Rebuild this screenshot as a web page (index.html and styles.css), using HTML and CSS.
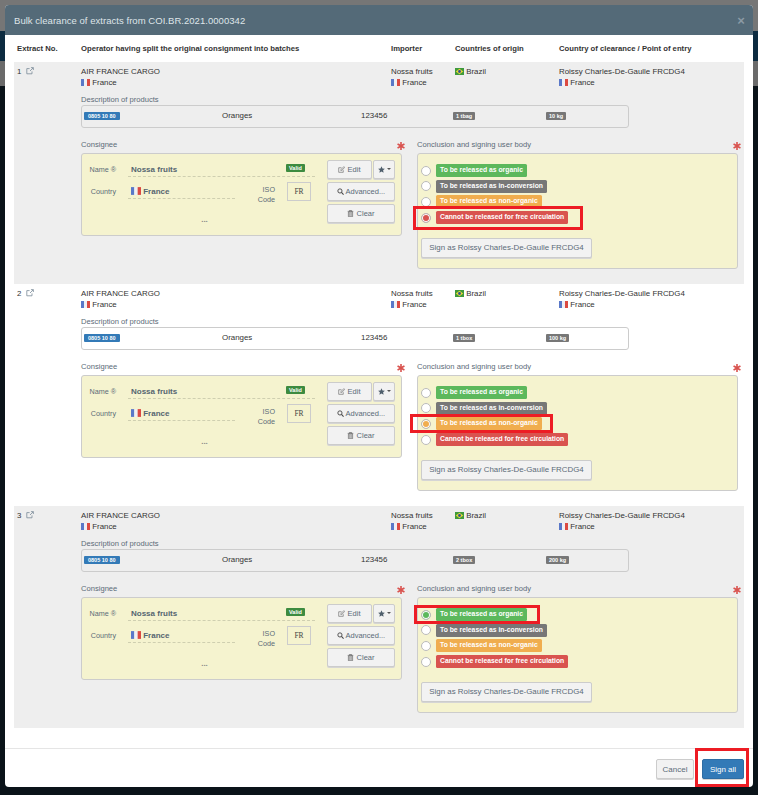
FILE: index.html
```html
<!DOCTYPE html>
<html lang="en">
<head>
    <meta charset="UTF-8">
    <title>Bulk clearance of extracts</title>
    <link rel="stylesheet" href="styles.css">
</head>
<body>
    <svg class="defs" width="0" height="0">
        <symbol id="fr" viewBox="0 0 9 7"><rect width="3" height="7" fill="#5a78c8"/><rect x="3" width="3" height="7" fill="#eef0f6"/><rect x="6" width="3" height="7" fill="#dc4a42"/></symbol>
        <symbol id="br" viewBox="0 0 9 7"><rect width="9" height="7" fill="#3f9a3c"/><path d="M4.5 .8 8.2 3.5 4.5 6.2 .8 3.5z" fill="#e8d834"/><circle cx="4.5" cy="3.5" r="1.4" fill="#2f4f96"/></symbol>
        <symbol id="ext" viewBox="0 0 10 10"><path d="M7.5 5.5v3h-6.5v-6.5h3.5M5 5 9 1M6.2 .8h3v3" fill="none" stroke="#7a8a98" stroke-width="1"/></symbol>
        <symbol id="edit" viewBox="0 0 10 10"><path d="M7.5 6v3h-6.5v-6.5h4M4 6.5l.4-1.6 4-4 1.2 1.2-4 4z" fill="none" stroke="#666" stroke-width=".9"/></symbol>
        <symbol id="search" viewBox="0 0 10 10"><circle cx="4.2" cy="4.2" r="3" fill="none" stroke="#444" stroke-width="1.3"/><path d="M6.4 6.4 9.4 9.4" stroke="#444" stroke-width="1.5"/></symbol>
        <symbol id="trash" viewBox="0 0 10 10"><path d="M2 3h6v6.5h-6zM1 2h8M3.5 2v-1.300h3v1.300M4 4v4.500M6 4v4.500" fill="none" stroke="#555" stroke-width=".9"/></symbol>
        <symbol id="star" viewBox="0 0 10 10"><path d="M5 .4 6.400 3.500 9.800 3.900 7.300 6.200 8 9.600 5 7.900 2 9.600 2.700 6.200 .2 3.900 3.600 3.500z" fill="#4f5f6c"/></symbol>
        <symbol id="req" viewBox="0 0 10 10"><path d="M4 0h2v3.200l2.800-1.600 1 1.700-2.800 1.700 2.800 1.700-1 1.700-2.800-1.600v3.200h-2v-3.200l-2.800 1.600-1-1.700 2.800-1.700-2.800-1.700 1-1.700 2.800 1.600z" fill="#d9534f"/></symbol>
    </svg>

    <div class="backdrop-top"></div>
    <div class="backdrop-nav"></div>
    <div class="backdrop-sub"></div>

    <div class="modal">
        <div class="modal-header">
            <span>Bulk clearance of extracts from COI.BR.2021.0000342</span>
            <span class="close">×</span>
        </div>

        <div class="modal-body">
            <div class="columns heads">
                <div>Extract No.</div>
                <div>Operator having split the original consignment into batches</div>
                <div>Importer</div>
                <div>Countries of origin</div>
                <div>Country of clearance / Point of entry</div>
            </div>

            <div class="extract shaded">
                <div class="columns">
                    <div class="num">1 <svg class="ext"><use href="#ext"/></svg></div>
                    <div>AIR FRANCE CARGO<br><svg class="flag"><use href="#fr"/></svg> France</div>
                    <div>Nossa fruits<br><svg class="flag"><use href="#fr"/></svg> France</div>
                    <div><svg class="flag"><use href="#br"/></svg> Brazil</div>
                    <div>Roissy Charles-De-Gaulle FRCDG4<br><svg class="flag"><use href="#fr"/></svg> France</div>
                </div>
                <div class="details">
                    <div class="caption">Description of products</div>
                    <div class="products">
                        <span><b class="tag blue">0805 10 80</b></span>
                        <span>Oranges</span>
                        <span>123456</span>
                        <span><b class="tag grey">1 tbag</b></span>
                        <span><b class="tag grey">10 kg</b></span>
                    </div>
                    <div class="panels">
                        <div class="panel-left">
                            <div class="caption">Consignee</div>
                            <svg class="req"><use href="#req"/></svg>
                            <div class="box consignee">
                                <div class="fields">
                                    <div class="field name-row">
                                        <label>Name ®</label>
                                        <div class="value wide">Nossa fruits <b class="tag valid">Valid</b></div>
                                    </div>
                                    <div class="field">
                                        <label>Country</label>
                                        <div class="value narrow"><svg class="flag big"><use href="#fr"/></svg> France</div>
                                        <label class="iso">ISO<br>Code</label>
                                        <div class="iso-code">FR</div>
                                    </div>
                                    <div class="dots">...</div>
                                </div>
                                <div class="actions">
                                    <div class="btn-row">
                                        <button class="btn edit"><svg class="ico"><use href="#edit"/></svg> Edit</button>
                                        <button class="btn fav"><svg class="ico"><use href="#star"/></svg><i class="caret"></i></button>
                                    </div>
                                    <button class="btn"><svg class="ico"><use href="#search"/></svg> Advanced...</button>
                                    <button class="btn"><svg class="ico"><use href="#trash"/></svg> Clear</button>
                                </div>
                            </div>
                        </div>
                        <div class="panel-right">
                            <div class="caption">Conclusion and signing user body</div>
                            <svg class="req"><use href="#req"/></svg>
                            <div class="box conclusion">
                                <div class="option"><i class="radio"></i><b class="pill green">To be released as organic</b></div>
                                <div class="option"><i class="radio"></i><b class="pill grey">To be released as in-conversion</b></div>
                                <div class="option"><i class="radio"></i><b class="pill orange">To be released as non-organic</b></div>
                                <div class="option"><i class="radio on-red"></i><b class="pill red">Cannot be released for free circulation</b></div>
                                <button class="btn sign">Sign as Roissy Charles-De-Gaulle FRCDG4</button>
                                <div class="mark mark-1"></div>
                            </div>
                        </div>
                    </div>
                </div>
            </div>

            <div class="extract">
                <div class="columns">
                    <div class="num">2 <svg class="ext"><use href="#ext"/></svg></div>
                    <div>AIR FRANCE CARGO<br><svg class="flag"><use href="#fr"/></svg> France</div>
                    <div>Nossa fruits<br><svg class="flag"><use href="#fr"/></svg> France</div>
                    <div><svg class="flag"><use href="#br"/></svg> Brazil</div>
                    <div>Roissy Charles-De-Gaulle FRCDG4<br><svg class="flag"><use href="#fr"/></svg> France</div>
                </div>
                <div class="details">
                    <div class="caption">Description of products</div>
                    <div class="products">
                        <span><b class="tag blue">0805 10 80</b></span>
                        <span>Oranges</span>
                        <span>123456</span>
                        <span><b class="tag grey">1 tbox</b></span>
                        <span><b class="tag grey">100 kg</b></span>
                    </div>
                    <div class="panels">
                        <div class="panel-left">
                            <div class="caption">Consignee</div>
                            <svg class="req"><use href="#req"/></svg>
                            <div class="box consignee">
                                <div class="fields">
                                    <div class="field name-row">
                                        <label>Name ®</label>
                                        <div class="value wide">Nossa fruits <b class="tag valid">Valid</b></div>
                                    </div>
                                    <div class="field">
                                        <label>Country</label>
                                        <div class="value narrow"><svg class="flag big"><use href="#fr"/></svg> France</div>
                                        <label class="iso">ISO<br>Code</label>
                                        <div class="iso-code">FR</div>
                                    </div>
                                    <div class="dots">...</div>
                                </div>
                                <div class="actions">
                                    <div class="btn-row">
                                        <button class="btn edit"><svg class="ico"><use href="#edit"/></svg> Edit</button>
                                        <button class="btn fav"><svg class="ico"><use href="#star"/></svg><i class="caret"></i></button>
                                    </div>
                                    <button class="btn"><svg class="ico"><use href="#search"/></svg> Advanced...</button>
                                    <button class="btn"><svg class="ico"><use href="#trash"/></svg> Clear</button>
                                </div>
                            </div>
                        </div>
                        <div class="panel-right">
                            <div class="caption">Conclusion and signing user body</div>
                            <svg class="req"><use href="#req"/></svg>
                            <div class="box conclusion">
                                <div class="option"><i class="radio"></i><b class="pill green">To be released as organic</b></div>
                                <div class="option"><i class="radio"></i><b class="pill grey">To be released as in-conversion</b></div>
                                <div class="option"><i class="radio on-orange"></i><b class="pill orange">To be released as non-organic</b></div>
                                <div class="option"><i class="radio"></i><b class="pill red">Cannot be released for free circulation</b></div>
                                <button class="btn sign">Sign as Roissy Charles-De-Gaulle FRCDG4</button>
                                <div class="mark mark-2"></div>
                            </div>
                        </div>
                    </div>
                </div>
            </div>

            <div class="extract shaded">
                <div class="columns">
                    <div class="num">3 <svg class="ext"><use href="#ext"/></svg></div>
                    <div>AIR FRANCE CARGO<br><svg class="flag"><use href="#fr"/></svg> France</div>
                    <div>Nossa fruits<br><svg class="flag"><use href="#fr"/></svg> France</div>
                    <div><svg class="flag"><use href="#br"/></svg> Brazil</div>
                    <div>Roissy Charles-De-Gaulle FRCDG4<br><svg class="flag"><use href="#fr"/></svg> France</div>
                </div>
                <div class="details">
                    <div class="caption">Description of products</div>
                    <div class="products">
                        <span><b class="tag blue">0805 10 80</b></span>
                        <span>Oranges</span>
                        <span>123456</span>
                        <span><b class="tag grey">2 tbox</b></span>
                        <span><b class="tag grey">200 kg</b></span>
                    </div>
                    <div class="panels">
                        <div class="panel-left">
                            <div class="caption">Consignee</div>
                            <svg class="req"><use href="#req"/></svg>
                            <div class="box consignee">
                                <div class="fields">
                                    <div class="field name-row">
                                        <label>Name ®</label>
                                        <div class="value wide">Nossa fruits <b class="tag valid">Valid</b></div>
                                    </div>
                                    <div class="field">
                                        <label>Country</label>
                                        <div class="value narrow"><svg class="flag big"><use href="#fr"/></svg> France</div>
                                        <label class="iso">ISO<br>Code</label>
                                        <div class="iso-code">FR</div>
                                    </div>
                                    <div class="dots">...</div>
                                </div>
                                <div class="actions">
                                    <div class="btn-row">
                                        <button class="btn edit"><svg class="ico"><use href="#edit"/></svg> Edit</button>
                                        <button class="btn fav"><svg class="ico"><use href="#star"/></svg><i class="caret"></i></button>
                                    </div>
                                    <button class="btn"><svg class="ico"><use href="#search"/></svg> Advanced...</button>
                                    <button class="btn"><svg class="ico"><use href="#trash"/></svg> Clear</button>
                                </div>
                            </div>
                        </div>
                        <div class="panel-right">
                            <div class="caption">Conclusion and signing user body</div>
                            <svg class="req"><use href="#req"/></svg>
                            <div class="box conclusion">
                                <div class="option"><i class="radio on-green"></i><b class="pill green">To be released as organic</b></div>
                                <div class="option"><i class="radio"></i><b class="pill grey">To be released as in-conversion</b></div>
                                <div class="option"><i class="radio"></i><b class="pill orange">To be released as non-organic</b></div>
                                <div class="option"><i class="radio"></i><b class="pill red">Cannot be released for free circulation</b></div>
                                <button class="btn sign">Sign as Roissy Charles-De-Gaulle FRCDG4</button>
                                <div class="mark mark-3"></div>
                            </div>
                        </div>
                    </div>
                </div>
            </div>
        </div>

        <div class="modal-footer">
            <button class="btn cancel">Cancel</button>
            <button class="btn primary">Sign all</button>
            <div class="mark mark-sign"></div>
        </div>
    </div>
</body>
</html>
```

FILE: styles.css
```css
* {
    box-sizing: border-box;
}
html, body {
    margin: 0;
    height: 795px;
    overflow: hidden;
}
body {
    position: relative;
    padding: 5px 5px 0;
    background: #0a1319;
    font-family: "Liberation Sans", Arial, sans-serif;
    font-size: 7.9px;
    line-height: 11px;
    color: #333;
}
.defs {
    position: absolute;
}

/* page behind the dialog */
.backdrop-top, .backdrop-nav, .backdrop-sub {
    position: absolute;
    left: 0;
    right: 0;
}
.backdrop-top {
    top: 0;
    height: 31px;
    background: #767676;
}
.backdrop-nav {
    top: 31px;
    height: 30px;
    background: #0c2b40;
}
.backdrop-sub {
    top: 61px;
    height: 25px;
    background: #6a6a6a;
}

.modal {
    position: relative;
    width: 748px;
    height: 782px;
    background: white;
    border-radius: 4px;
}
.modal-header {
    display: flex;
    justify-content: space-between;
    align-items: center;
    height: 30px;
    padding: 0 8px 0 9px;
    background: #546a78;
    border-radius: 4px 4px 0 0;
    color: #dfe5e9;
    font-size: 9.5px;
    letter-spacing: 0.04px;
}
.close {
    color: #8b9aa5;
    font-size: 13px;
    font-weight: bold;
}
.modal-body {
    height: 713px;
    padding: 0 9px;
}
.modal-footer {
    position: relative;
    display: flex;
    justify-content: flex-end;
    gap: 8px;
    height: 39px;
    padding: 10px 9px;
    border-top: 1px solid #e5e5e5;
}

.columns {
    display: grid;
    grid-template-columns: 64px 310px 64px 104px 1fr;
    padding-left: 3px;
}
.heads {
    align-items: center;
    height: 27px;
    font-weight: bold;
    font-size: 7.7px;
}
.extract {
    height: 222px;
    padding-top: 4px;
}
.shaded {
    background: #eee;
}
.num {
    display: flex;
    align-items: flex-start;
    gap: 5px;
}
.ext {
    width: 8px;
    height: 8px;
    margin-top: 1px;
}
.flag {
    width: 9px;
    height: 7px;
    vertical-align: -0.5px;
}
.flag.big {
    width: 10px;
    height: 8px;
    vertical-align: -1px;
}
.details {
    padding-left: 67px;
}
.caption {
    color: #5b6b78;
    font-size: 7.6px;
}
.details > .caption {
    margin-top: 6px;
}
.products {
    display: grid;
    grid-template-columns: 138px 139px 92px 93px 1fr;
    align-items: start;
    width: 548px;
    height: 23px;
    padding: 4px 0 0 2px;
    border: 1px solid #ccc;
    border-radius: 3px;
}
.extract:not(.shaded) .products {
    background: white;
}
.tag {
    display: block;
    width: fit-content;
    margin-top: 2px;
    padding: 0 3px;
    border-radius: 1px;
    color: white;
    font-size: 5.5px;
    line-height: 8px;
}
.tag.blue {
    padding: 0 4px;
    background: #337ab7;
}
.tag.grey {
    background: #777;
}
.tag.valid {
    position: absolute;
    left: 158px;
    top: 4px;
    margin: 0;
    background: #3d8b40;
}

.panels {
    display: flex;
    gap: 15px;
    margin-top: 11px;
}
.panel-left, .panel-right {
    position: relative;
    width: 321px;
}
.panel-left .caption, .panel-right .caption {
    height: 14px;
}
.req {
    position: absolute;
    top: 3px;
    right: -3px;
    width: 8px;
    height: 8px;
}
.box {
    position: relative;
    background: #f5f3cf;
    border: 1px solid #ccc;
    border-radius: 3px;
}

.consignee {
    display: flex;
    height: 83px;
    padding: 6px 6px 0 0;
}
.fields {
    width: 245px;
}
.field {
    display: flex;
    align-items: flex-start;
    height: 22px;
}
.field label {
    width: 34px;
    padding-top: 4px;
    text-align: right;
    color: #5b6b78;
    font-size: 7.2px;
}
.value {
    position: relative;
    height: 17px;
    margin-left: 12px;
    padding: 4px 0 0 3px;
    border-bottom: 1px dashed #cfcfb0;
    color: #55656f;
    font-size: 8px;
    font-weight: bold;
}
.wide {
    width: 187px;
}
.narrow {
    width: 107px;
}
.field label.iso {
    width: 40px;
    padding-top: 3px;
    line-height: 10px;
}
.iso-code {
    width: 24px;
    height: 19px;
    margin-left: 12px;
    border: 1px solid #ccc;
    color: #444;
    text-align: center;
    font-family: "Liberation Serif", serif;
    font-size: 7.5px;
    line-height: 17px;
}
.dots {
    margin-top: 10px;
    text-align: center;
    color: #888;
    font-weight: bold;
}
.actions {
    display: flex;
    flex-direction: column;
    gap: 3px;
    width: 68px;
}
.btn-row {
    display: flex;
    gap: 1px;
}
.btn {
    height: 19px;
    padding: 0;
    background: #f2f2f2;
    border: 1px solid #ccc;
    border-radius: 2px;
    color: #5b6b78;
    font-family: inherit;
    font-size: 7.5px;
    box-shadow: 0 1px 0 #d5d5d5;
}
.edit {
    width: 45px;
}
.fav {
    width: 22px;
}
.ico {
    width: 7px;
    height: 7px;
    vertical-align: -1px;
}
.caret {
    display: inline-block;
    margin-left: 2px;
    border-top: 2px solid #555;
    border-left: 2px solid transparent;
    border-right: 2px solid transparent;
    vertical-align: 2px;
}

.conclusion {
    height: 116px;
    padding: 10px 0 0 3px;
}
.option {
    display: flex;
    align-items: center;
    gap: 5px;
    height: 13px;
    margin-bottom: 2.7px;
}
.radio {
    width: 10px;
    height: 10px;
    background: white;
    border: 1px solid #bbb;
    border-radius: 50%;
}
.on-red {
    background: #d9534f;
    box-shadow: inset 0 0 0 1px white;
}
.on-orange {
    background: #f0ad4e;
    box-shadow: inset 0 0 0 1px white;
}
.on-green {
    background: #5cb85c;
    box-shadow: inset 0 0 0 1px white;
}
.pill {
    height: 13px;
    padding: 0 4px;
    border-radius: 1.5px;
    color: white;
    font-size: 6.8px;
    line-height: 12px;
    white-space: nowrap;
}
.pill.green {
    background: #5cb85c;
}
.pill.grey {
    background: #777;
}
.pill.orange {
    background: #f0ad4e;
}
.pill.red {
    background: #d9534f;
}
.sign {
    width: 171px;
    height: 20px;
    margin-top: 11px;
    font-size: 7.9px;
}

/* red annotation frames */
.mark {
    position: absolute;
    border: 3px solid #ed1c24;
}
.mark-1 {
    left: -5px;
    top: 52px;
    width: 170px;
    height: 24px;
}
.mark-2 {
    left: -8px;
    top: 38px;
    width: 143px;
    height: 19px;
}
.mark-3 {
    left: -4px;
    top: 7px;
    width: 126px;
    height: 19px;
}
.mark-sign {
    right: 4px;
    top: -1px;
    width: 54px;
    height: 39px;
}
.cancel {
    width: 38px;
    height: 20px;
    font-size: 8px;
}
.primary {
    width: 42px;
    height: 20px;
    background: #337ab7;
    border-color: #2e6da4;
    color: white;
    font-size: 8px;
}
```
